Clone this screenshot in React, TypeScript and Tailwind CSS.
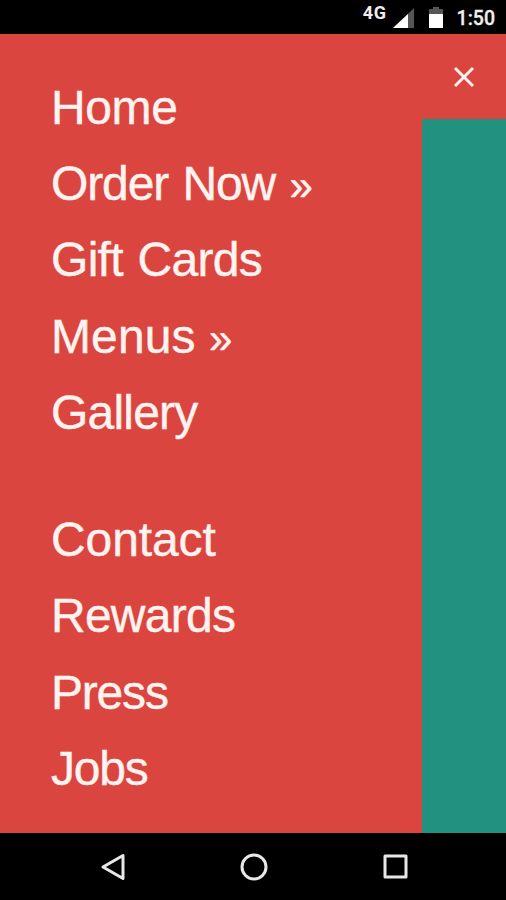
import React from 'react';

interface MenuItem {
  label: string;
  spacing: string;
  hasSubmenu?: boolean;
}

const primaryItems: MenuItem[] = [
  { label: 'Home', spacing: 'tracking-[-0.4px]' },
  { label: 'Order Now', spacing: 'tracking-[-1.1px] [word-spacing:2px]', hasSubmenu: true },
  { label: 'Gift Cards', spacing: 'tracking-[-0.7px] [word-spacing:2px]' },
  { label: 'Menus', spacing: 'tracking-[0.1px]', hasSubmenu: true },
  { label: 'Gallery', spacing: 'tracking-[-0.8px]' },
];

const secondaryItems: MenuItem[] = [
  { label: 'Contact', spacing: 'tracking-[-0.1px]' },
  { label: 'Rewards', spacing: 'tracking-[-0.75px]' },
  { label: 'Press', spacing: 'tracking-[-1.2px]' },
  { label: 'Jobs', spacing: 'tracking-[-1.2px]' },
];

const StatusBar: React.FC = () => (
  <div className="flex h-[34px] shrink-0 justify-end bg-black text-[#eee]">
    <span className="mt-[4px] mr-[6px] font-['Roboto',sans-serif] text-[18px] leading-[18px] font-bold tracking-[0.6px]">4G</span>
    <svg className="mt-[8px] mr-[15px]" width="21" height="20" viewBox="0 0 21 20">
      <path d="M21 0V20H0Z" fill="#555" />
      <path d="M15 6V20H0Z" fill="#fff" />
    </svg>
    <svg className="mt-[7px] mr-[14px]" width="14" height="21" viewBox="0 0 14 21">
      <path d="M4 0h6v2h4v5H0V2h4Z" fill="#555" />
      <path d="M0 7h14v14H0Z" fill="#fff" />
    </svg>
    <span className="mt-[8px] mr-[11px] font-['Roboto',sans-serif] text-[19.5px] leading-[22px] font-medium [-webkit-text-stroke:0.3px_#eee]">1:50</span>
  </div>
);

const MenuList: React.FC<{ items: MenuItem[] }> = ({ items }) => (
  <ul>
    {items.map(item => (
      <li key={item.label} className="flex h-[76.3px] items-center">
        <a href="#" className={`text-[48px] leading-none whitespace-nowrap [-webkit-text-stroke:0.4px_#fff3ef] ${item.spacing}`}>
          {item.label}
          {item.hasSubmenu && <> <span className="text-[42px] leading-none">»</span></>}
        </a>
      </li>
    ))}
  </ul>
);

const NavBar: React.FC = () => (
  <div className="flex h-[67px] shrink-0 items-center justify-center gap-[115px] bg-black pl-px">
    <svg width="25" height="28" viewBox="0 0 25 28" fill="none" stroke="#e8e8e8" strokeWidth="3">
      <path d="M23 2.5V25.5L3 14Z" strokeLinejoin="round" />
    </svg>
    <svg width="28" height="28" viewBox="0 0 28 28" fill="none" stroke="#e8e8e8" strokeWidth="3">
      <circle cx="14" cy="14" r="12" />
    </svg>
    <svg width="25" height="25" viewBox="0 0 25 25" fill="none" stroke="#e8e8e8" strokeWidth="3">
      <rect x="2" y="2" width="21" height="21" strokeLinejoin="round" />
    </svg>
  </div>
);

const App: React.FC = () => {
  return (
    <div className="flex h-[900px] w-[506px] flex-col overflow-hidden">
      <StatusBar />
      <div className="flex min-h-0 flex-1 bg-[#239180]">
        <nav className="w-[422px] bg-[#da4540] pt-[35.6px] pl-[51px] font-['Liberation_Sans',sans-serif] text-[#fff3ef]">
          <MenuList items={primaryItems} />
          <div className="h-[50.7px]" />
          <MenuList items={secondaryItems} />
        </nav>
        <button aria-label="Close menu" className="flex h-[85px] w-[84px] items-center justify-center bg-[#da4540]">
          <svg width="22" height="22" viewBox="0 0 22 22" stroke="#fff3ef" strokeWidth="3">
            <path d="M2 2L20 20M20 2L2 20" />
          </svg>
        </button>
      </div>
      <NavBar />
    </div>
  );
};

export default App;
